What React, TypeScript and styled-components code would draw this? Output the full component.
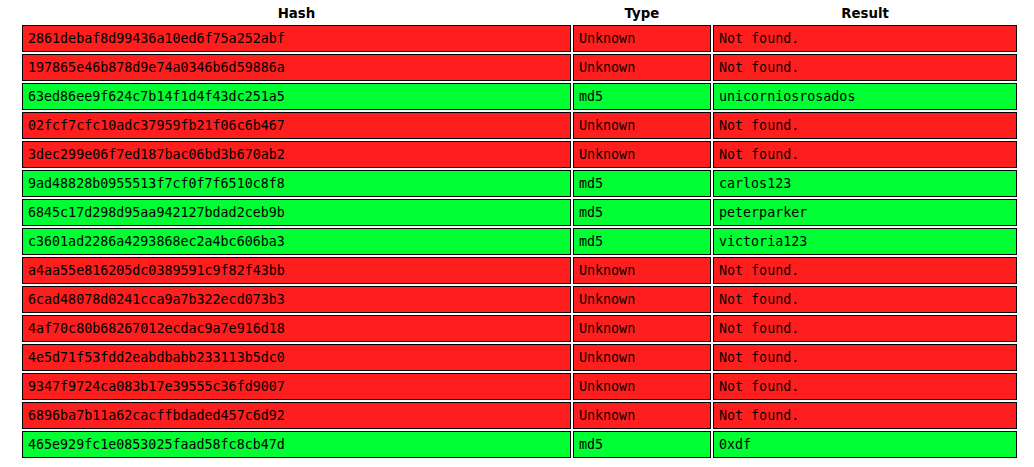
import React from "react";
import styled, { createGlobalStyle } from "styled-components";

const GlobalStyle = createGlobalStyle`
  html, body {
    margin: 0;
    padding: 0;
    background: #ffffff;
  }
`;

const Page = styled.div`
  padding: 0 0 0 20px;
`;

const Table = styled.table`
  border-collapse: separate;
  border-spacing: 2px;
  table-layout: fixed;
  width: 999px;
`;

const HeadCell = styled.th<{ $w?: number }>`
  box-sizing: border-box;
  width: ${(p) => (p.$w ? `${p.$w}px` : "auto")};
  padding: 4px 0 2px;
  font-family: "DejaVu Sans", Verdana, sans-serif;
  font-size: 13.33px;
  font-weight: bold;
  line-height: 15px;
  color: #000;
  text-align: center;
`;

const Cell = styled.td<{ $ok: boolean }>`
  box-sizing: border-box;
  height: 27px;
  padding: 5px 5px 5px 5px;
  border: 1px solid #000;
  background: ${(p) => (p.$ok ? "#00ff33" : "#ff1e1e")};
  font-family: "DejaVu Sans Mono", "Liberation Mono", monospace;
  font-size: 13.33px;
  line-height: 15px;
  color: #000;
  white-space: nowrap;
  overflow: hidden;
`;

type Row = { hash: string; type: string; result: string };

const rows: Row[] = [
  { hash: "2861debaf8d99436a10ed6f75a252abf", type: "Unknown", result: "Not found." },
  { hash: "197865e46b878d9e74a0346b6d59886a", type: "Unknown", result: "Not found." },
  { hash: "63ed86ee9f624c7b14f1d4f43dc251a5", type: "md5", result: "unicorniosrosados" },
  { hash: "02fcf7cfc10adc37959fb21f06c6b467", type: "Unknown", result: "Not found." },
  { hash: "3dec299e06f7ed187bac06bd3b670ab2", type: "Unknown", result: "Not found." },
  { hash: "9ad48828b0955513f7cf0f7f6510c8f8", type: "md5", result: "carlos123" },
  { hash: "6845c17d298d95aa942127bdad2ceb9b", type: "md5", result: "peterparker" },
  { hash: "c3601ad2286a4293868ec2a4bc606ba3", type: "md5", result: "victoria123" },
  { hash: "a4aa55e816205dc0389591c9f82f43bb", type: "Unknown", result: "Not found." },
  { hash: "6cad48078d0241cca9a7b322ecd073b3", type: "Unknown", result: "Not found." },
  { hash: "4af70c80b68267012ecdac9a7e916d18", type: "Unknown", result: "Not found." },
  { hash: "4e5d71f53fdd2eabdbabb233113b5dc0", type: "Unknown", result: "Not found." },
  { hash: "9347f9724ca083b17e39555c36fd9007", type: "Unknown", result: "Not found." },
  { hash: "6896ba7b11a62cacffbdaded457c6d92", type: "Unknown", result: "Not found." },
  { hash: "465e929fc1e0853025faad58fc8cb47d", type: "md5", result: "0xdf" },
];

export default function App() {
  return (
    <Page>
      <GlobalStyle />
      <Table>
        <thead>
          <tr>
            <HeadCell $w={549}>Hash</HeadCell>
            <HeadCell $w={138}>Type</HeadCell>
            <HeadCell>Result</HeadCell>
          </tr>
        </thead>
        <tbody>
          {rows.map((r) => {
            const ok = r.type !== "Unknown";
            return (
              <tr key={r.hash}>
                <Cell $ok={ok}>{r.hash}</Cell>
                <Cell $ok={ok}>{r.type}</Cell>
                <Cell $ok={ok}>{r.result}</Cell>
              </tr>
            );
          })}
        </tbody>
      </Table>
    </Page>
  );
}
